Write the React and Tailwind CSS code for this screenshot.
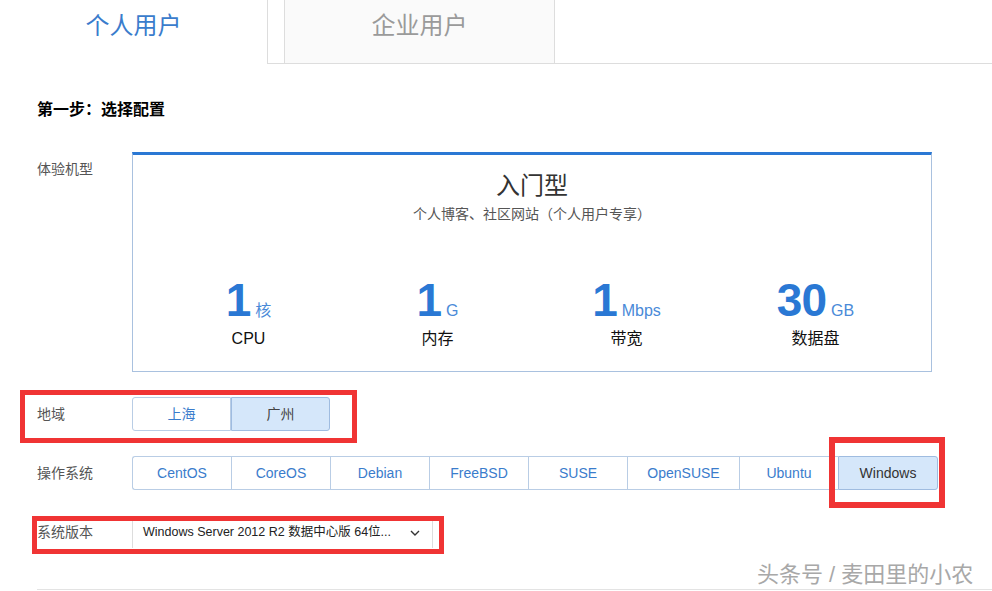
const osList = ['CentOS', 'CoreOS', 'Debian', 'FreeBSD', 'SUSE', 'OpenSUSE', 'Ubuntu', 'Windows'];

const stats = [
    { num: '1', unit: '核', label: 'CPU' },
    { num: '1', unit: 'G', label: '内存' },
    { num: '1', unit: 'Mbps', label: '带宽' },
    { num: '30', unit: 'GB', label: '数据盘' },
];

function Label({ children }) {
    return <div className="w-[95px] shrink-0 text-[14px] text-[#555]">{children}</div>;
}

export default function App() {
    const font = { fontFamily: '"Liberation Sans", Arial, "Noto Sans CJK SC", sans-serif' };

    return (
        <div className="relative w-[992px] h-[591px] overflow-hidden bg-white" style={font}>
            {/* tabs */}
            <div className="flex h-[64px]">
                <div className="w-[268px] border-r border-[#ddd] flex justify-center pt-[8px]">
                    <span className="text-[24px] text-[#3a7ccc]">个人用户</span>
                </div>
                <div className="w-[16px] border-b border-[#ddd]"></div>
                <div className="w-[271px] bg-[#fafafa] border-l border-r border-b border-[#ddd] flex justify-center pt-[8px]">
                    <span className="text-[24px] text-[#9a9a9a]">企业用户</span>
                </div>
                <div className="flex-1 border-b border-[#ddd]"></div>
            </div>

            <div className="pl-[37px]">
                <div className="mt-[36px] text-[16px] font-bold text-black leading-[20px]">第一步：选择配置</div>

                {/* plan */}
                <div className="flex mt-[32px]">
                    <div className="w-[95px] shrink-0 pt-[7px] text-[14px] text-[#555]">体验机型</div>
                    <div className="w-[800px] h-[220px] border border-[#a9c1df] border-t-[3px] border-t-[#2a78d4] flex flex-col items-center">
                        <div className="mt-[15px] text-[24px] leading-[32px] text-[#333]">入门型</div>
                        <div className="mt-[2px] text-[14px] leading-[20px] text-[#555]">个人博客、社区网站（个人用户专享）</div>
                        <div className="mt-[54px] w-full px-[21px] grid grid-cols-4">
                            {stats.map((s) => (
                                <div key={s.label} className="flex flex-col items-center">
                                    <div className="flex items-baseline">
                                        <span className="text-[46px] leading-[44px] font-bold text-[#2a78d4] tracking-[-1px]">{s.num}</span>
                                        <span className="ml-[5px] text-[16px] text-[#4a8ad8]">{s.unit}</span>
                                    </div>
                                    <div className="mt-[6px] text-[16px] leading-[20px] text-[#111]">{s.label}</div>
                                </div>
                            ))}
                        </div>
                    </div>
                </div>

                {/* region */}
                <div className="flex items-center mt-[25px]">
                    <Label>地域</Label>
                    <div className="flex">
                        <div className="w-[99px] h-[34px] flex items-center justify-center text-[14px] text-[#3a7ccc] border border-[#b9cde5] rounded-l-[3px]">上海</div>
                        <div className="w-[99px] h-[34px] flex items-center justify-center text-[14px] text-[#444] bg-[#d5e7fa] border border-[#9fbce0] rounded-r-[3px]">广州</div>
                    </div>
                </div>

                {/* os */}
                <div className="flex items-center mt-[25px]">
                    <Label>操作系统</Label>
                    <div className="flex">
                        {osList.map((os, i) => {
                            const active = os === 'Windows';
                            const w = os === 'OpenSUSE' ? 'w-[112px]' : 'w-[99px]';
                            return (
                                <div
                                    key={os}
                                    className={
                                        active
                                            ? 'w-[100px] h-[34px] flex items-center justify-center text-[14px] text-[#333] bg-[#d5e7fa] border border-[#9fbce0] rounded-r-[3px]'
                                            : `${w} h-[34px] flex items-center justify-center text-[14px] text-[#3a7ccc] border-y border-l border-[#b9cde5] ${i === 0 ? 'rounded-l-[3px]' : ''}`
                                    }
                                >
                                    {os}
                                </div>
                            );
                        })}
                    </div>
                </div>

                {/* version */}
                <div className="flex items-center mt-[27px]">
                    <Label>系统版本</Label>
                    <div className="w-[301px] h-[31px] flex items-center justify-between pl-[10px] pr-[12px] border-x border-[#ddd] bg-white">
                        <span className="text-[12.5px] text-[#222]">Windows Server 2012 R2 数据中心版 64位...</span>
                        <svg width="10" height="6" viewBox="0 0 10 6" fill="none" stroke="#333" strokeWidth="1.4">
                            <path d="M1 1l4 4 4-4" />
                        </svg>
                    </div>
                </div>

                <div className="mt-[41px] border-t border-[#e3e3e3]"></div>
            </div>

            {/* red annotation boxes */}
            <div className="absolute left-[20px] top-[390px] w-[337px] h-[53px] border-[5px] border-[#f03434]"></div>
            <div className="absolute left-[829px] top-[437px] w-[116px] h-[71px] border-[6px] border-[#f03434]"></div>
            <div className="absolute left-[32px] top-[516px] w-[412px] h-[38px] border-[5px] border-[#f03434]"></div>

            {/* watermark */}
            <div className="absolute left-[757px] top-[558px] text-[22px] text-[#a8a8a8]">头条号 / 麦田里的小农</div>
        </div>
    );
}
